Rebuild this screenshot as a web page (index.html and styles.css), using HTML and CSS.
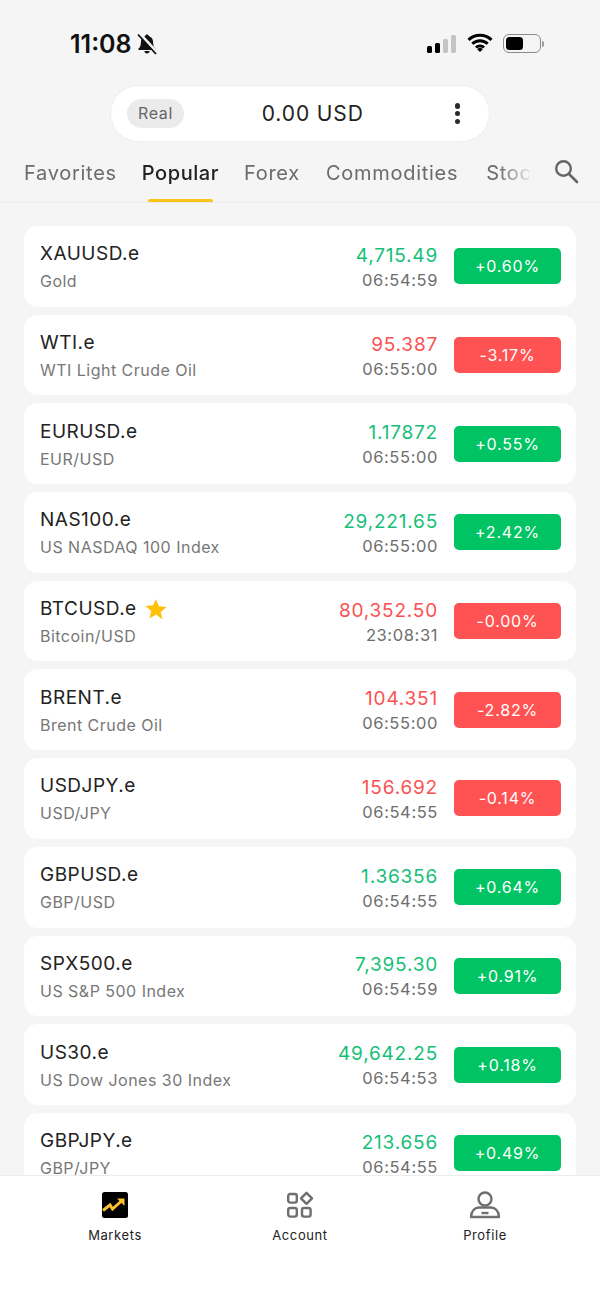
FILE: index.html
```html
<!DOCTYPE html>
<html lang="en">
<head>
  <meta charset="UTF-8" />
  <meta name="viewport" content="width=device-width, initial-scale=1.0"/>
  <title>Markets</title>
  <link rel="stylesheet" href="styles.css">
</head>
<body>

<div class="statusbar">
  <div class="status-left">
    <span class="clock">11:08</span>
    <svg class="bell" width="22" height="22" viewBox="0 0 22 22">
      <path d="M11 1.500c-1 0-1.700.7-1.800 1.600C6.500 3.900 4.900 6.300 4.900 9.200c0 3.200-.7 4.800-2.400 6.300v1.500h17v-1.500c-1.700-1.500-2.400-3.100-2.400-6.300 0-2.900-1.600-5.300-4.300-6.100-.1-.9-.8-1.600-1.800-1.600zM8.300 18c.2 1.400 1.300 2.400 2.700 2.400s2.500-1 2.700-2.400z" fill="#111"/>
      <path d="M3.500 .5 21 19.500" stroke="#f5f5f5" stroke-width="3"/>
      <path d="M2 1.500 20 21" stroke="#111" stroke-width="1.800"/>
    </svg>
  </div>
  <div class="status-right">
    <div class="signal"><i class="s1"></i><i class="s2"></i><i class="s3"></i><i class="s4"></i></div>
    <svg class="wifi" width="26" height="20" viewBox="0 0 26 20">
      <path d="M1.500 6.800a16.500 16.500 0 0 1 23 0M5.300 10.800a11 11 0 0 1 15.400 0M9 14.500a5.800 5.800 0 0 1 8 0" fill="none" stroke="#000" stroke-width="3"/>
      <path d="M10.200 16.200 13 19l2.800-2.800a4 4 0 0 0-5.600 0z" fill="#000"/>
    </svg>
    <div class="battery"><div class="battery-level"></div></div>
    <div class="battery-cap"></div>
  </div>
</div>

<div class="account-pill">
  <span class="real-tag">Real</span>
  <span class="balance">0.00 USD</span>
  <div class="dots"><i></i><i></i><i></i></div>
</div>

<div class="tabbar">
  <div class="tabs">
    <span class="tab">Favorites</span>
    <span class="tab active">Popular</span>
    <span class="tab">Forex</span>
    <span class="tab">Commodities</span>
    <span class="tab">Stocks</span>
  </div>
  <svg class="search" width="28" height="28" viewBox="0 0 28 28">
    <circle cx="11.500" cy="11.500" r="7.300" fill="none" stroke="#666" stroke-width="2.400"/>
    <path d="M17 17 25 25" stroke="#666" stroke-width="2.600" stroke-linecap="round"/>
  </svg>
</div>

<div class="list">
  <div class="row">
    <div class="info"><div class="symbol">XAUUSD.e</div><div class="name">Gold</div></div>
    <div class="quote"><div class="price up">4,715.49</div><div class="time">06:54:59</div></div>
    <div class="change bg-up">+0.60%</div>
  </div>
  <div class="row">
    <div class="info"><div class="symbol">WTI.e</div><div class="name">WTI Light Crude Oil</div></div>
    <div class="quote"><div class="price down">95.387</div><div class="time">06:55:00</div></div>
    <div class="change bg-down">-3.17%</div>
  </div>
  <div class="row">
    <div class="info"><div class="symbol">EURUSD.e</div><div class="name">EUR/USD</div></div>
    <div class="quote"><div class="price up">1.17872</div><div class="time">06:55:00</div></div>
    <div class="change bg-up">+0.55%</div>
  </div>
  <div class="row">
    <div class="info"><div class="symbol">NAS100.e</div><div class="name">US NASDAQ 100 Index</div></div>
    <div class="quote"><div class="price up">29,221.65</div><div class="time">06:55:00</div></div>
    <div class="change bg-up">+2.42%</div>
  </div>
  <div class="row">
    <div class="info">
      <div class="symbol">BTCUSD.e
        <svg class="star" width="22" height="22" viewBox="0 0 22 22"><path d="M11 .8l3 7 7.500.7-5.700 5 1.700 7.400L11 16l-6.500 3.900 1.700-7.400-5.700-5 7.500-.7z" transform="translate(0 .5)" fill="#ffc107"/></svg>
      </div>
      <div class="name">Bitcoin/USD</div>
    </div>
    <div class="quote"><div class="price down">80,352.50</div><div class="time">23:08:31</div></div>
    <div class="change bg-down">-0.00%</div>
  </div>
  <div class="row">
    <div class="info"><div class="symbol">BRENT.e</div><div class="name">Brent Crude Oil</div></div>
    <div class="quote"><div class="price down">104.351</div><div class="time">06:55:00</div></div>
    <div class="change bg-down">-2.82%</div>
  </div>
  <div class="row">
    <div class="info"><div class="symbol">USDJPY.e</div><div class="name">USD/JPY</div></div>
    <div class="quote"><div class="price down">156.692</div><div class="time">06:54:55</div></div>
    <div class="change bg-down">-0.14%</div>
  </div>
  <div class="row">
    <div class="info"><div class="symbol">GBPUSD.e</div><div class="name">GBP/USD</div></div>
    <div class="quote"><div class="price up">1.36356</div><div class="time">06:54:55</div></div>
    <div class="change bg-up">+0.64%</div>
  </div>
  <div class="row">
    <div class="info"><div class="symbol">SPX500.e</div><div class="name">US S&amp;P 500 Index</div></div>
    <div class="quote"><div class="price up">7,395.30</div><div class="time">06:54:59</div></div>
    <div class="change bg-up">+0.91%</div>
  </div>
  <div class="row">
    <div class="info"><div class="symbol">US30.e</div><div class="name">US Dow Jones 30 Index</div></div>
    <div class="quote"><div class="price up">49,642.25</div><div class="time">06:54:53</div></div>
    <div class="change bg-up">+0.18%</div>
  </div>
  <div class="row">
    <div class="info"><div class="symbol">GBPJPY.e</div><div class="name">GBP/JPY</div></div>
    <div class="quote"><div class="price up">213.656</div><div class="time">06:54:55</div></div>
    <div class="change bg-up">+0.49%</div>
  </div>
</div>

<div class="bottomnav">
  <div class="navitem">
    <svg width="28" height="28" viewBox="0 0 28 28">
      <rect x="1" y="1" width="26" height="26" rx="2.500" fill="#000"/>
      <path d="M2 19.500 9 14l2.500 4L21 9.500" fill="none" stroke="#fbc02d" stroke-width="3"/>
      <path d="M16 7.500h7.500V15z" fill="#fbc02d"/>
    </svg>
    <span>Markets</span>
  </div>
  <div class="navitem">
    <svg width="28" height="28" viewBox="0 0 28 28" fill="none" stroke="#6f6f6f" stroke-width="2.400">
      <rect x="2.200" y="3" width="8.600" height="8.600" rx="2"/>
      <rect x="2.200" y="17" width="8.600" height="8.600" rx="2"/>
      <rect x="16" y="17" width="8.600" height="8.600" rx="2"/>
      <path d="M20.500 1.800 26 7.300l-5.500 5.500L15 7.300z" stroke-linejoin="round"/>
    </svg>
    <span>Account</span>
  </div>
  <div class="navitem">
    <svg width="32" height="28" viewBox="0 0 32 28" fill="none" stroke="#6f6f6f" stroke-width="2.400">
      <circle cx="16" cy="8" r="6.500"/>
      <path d="M2 26c0-6 4-9.500 8-9.500h12c4 0 8 3.500 8 9.500z" stroke-linejoin="round"/>
      <path d="M12.500 22h7" stroke-width="2.400"/>
    </svg>
    <span>Profile</span>
  </div>
</div>

</body>
</html>
```

FILE: styles.css
```css
* {
  box-sizing: border-box;
}
html, body {
  height: 100%;
}
body {
  margin: 0;
  background: #f5f5f5;
  font-family: Inter, "Noto Sans", sans-serif;
  color: #222;
  display: flex;
  flex-direction: column;
  height: 100vh;
  overflow: hidden;
}

/* status bar */
.statusbar {
  height: 85px;
  flex: none;
  display: flex;
  justify-content: space-between;
  padding: 29px 56px 0 70px;
}
.status-left {
  display: flex;
  align-items: flex-start;
  gap: 4px;
}
.clock {
  font-size: 25px;
  font-weight: 600;
  line-height: 30px;
  color: #111;
}
.bell {
  margin-top: 4px;
}
.status-right {
  display: flex;
  align-items: flex-start;
  padding-top: 5px;
}
.signal {
  display: flex;
  align-items: flex-end;
  gap: 3px;
  height: 19px;
  margin-right: 11px;
}
.signal i {
  width: 5px;
  border-radius: 1.500px;
  background: #000;
}
.signal .s1 { height: 7px; }
.signal .s2 { height: 10px; }
.signal .s3 { height: 14px; background: #c4c4c4; }
.signal .s4 { height: 18px; background: #c4c4c4; }
.wifi {
  margin-right: 10px;
  margin-top: -1px;
}
.battery {
  width: 38px;
  height: 19px;
  border: 1.500px solid #8a8a8a;
  border-radius: 6px;
  padding: 2px;
}
.battery-level {
  width: 17px;
  height: 100%;
  background: #000;
  border-radius: 3.500px;
}
.battery-cap {
  width: 2px;
  height: 6px;
  margin: 6.500px 0 0 1px;
  background: #9a9a9a;
  border-radius: 0 2px 2px 0;
}

/* account pill */
.account-pill {
  flex: none;
  width: 380px;
  height: 57px;
  margin-left: 110px;
  background: #fff;
  border: 1px solid #eeeeee;
  border-radius: 29px;
  display: flex;
  align-items: center;
  padding: 0 29px 0 16px;
}
.real-tag {
  width: 57px;
  height: 29px;
  background: #ebebeb;
  border-radius: 15px;
  font-size: 16px;
  line-height: 29px;
  letter-spacing: .6px;
  text-align: center;
  color: #666;
}
.balance {
  flex: 1;
  text-align: center;
  font-size: 21px;
  letter-spacing: .9px;
  color: #222;
  padding-right: 13px;
}
.dots {
  display: flex;
  flex-direction: column;
  gap: 2.250px;
}
.dots i {
  width: 5.500px;
  height: 5.500px;
  border-radius: 50%;
  background: #2a2a2a;
}

/* tabs */
.tabbar {
  flex: none;
  height: 61px;
  border-bottom: 1px solid #ebebeb;
  display: flex;
  align-items: flex-start;
  padding-left: 24px;
}
.tabs {
  width: 510px;
  height: 60px;
  display: flex;
  gap: 26px;
  overflow: hidden;
  -webkit-mask-image: linear-gradient(to right, #000 475px, transparent 510px);
  mask-image: linear-gradient(to right, #000 475px, transparent 510px);
}
.tab {
  flex: none;
  height: 60px;
  padding-top: 2px;
  font-size: 20px;
  line-height: 58px;
  letter-spacing: .72px;
  color: #6b6b6b;
  position: relative;
}
.tab:last-child {
  margin-left: 2px;
}
.tab.active {
  color: #222;
  font-weight: 500;
  letter-spacing: .55px;
  margin: 0 -1px 0 -1px;
}
.tab.active::after {
  content: "";
  position: absolute;
  left: 6px;
  right: 6px;
  bottom: 0;
  height: 3px;
  background: #fcc419;
  border-radius: 2px;
}
.search {
  margin: 15px 0 0 18px;
}

/* quote list */
.list {
  flex: 1;
  min-height: 0;
  overflow: hidden;
  padding: 23px 24px 0;
  display: flex;
  flex-direction: column;
  gap: 8px;
}
.row {
  flex: none;
  height: 80.700px;
  background: #fff;
  border-radius: 14px;
  display: flex;
  align-items: center;
  padding: 0 15px 0 16px;
}
.info {
  flex: 1;
}
.symbol {
  display: flex;
  align-items: center;
  gap: 8px;
  height: 28px;
  margin-top: 1px;
  font-size: 19px;
  line-height: 28px;
  letter-spacing: .5px;
  color: #222;
}
.name {
  margin-top: 1px;
  font-size: 16px;
  line-height: 24px;
  letter-spacing: .48px;
  color: #777;
}
.quote {
  text-align: right;
  padding-top: 3px;
}
.price {
  font-size: 19px;
  line-height: 25px;
  letter-spacing: .8px;
}
.up {
  color: #16bf78;
}
.down {
  color: #fa5252;
}
.time {
  font-size: 16.500px;
  line-height: 25px;
  letter-spacing: .6px;
  color: #6e6e6e;
}
.change {
  flex: none;
  width: 107px;
  height: 36px;
  margin-left: 16px;
  border-radius: 5px;
  color: #fff;
  font-size: 16px;
  line-height: 36px;
  letter-spacing: .8px;
  text-align: center;
}
.bg-up {
  background: #00c464;
}
.bg-down {
  background: #ff5252;
}

/* bottom nav */
.bottomnav {
  flex: none;
  height: 129px;
  background: #fff;
  border-top: 1px solid #ececec;
  display: flex;
  padding: 15px 22.500px 0;
}
.navitem {
  flex: 1;
  display: flex;
  flex-direction: column;
  align-items: center;
  gap: 7px;
}
.navitem svg {
  height: 28px;
}
.navitem span {
  font-size: 13px;
  line-height: 18px;
  letter-spacing: .6px;
  color: #222;
}
```
